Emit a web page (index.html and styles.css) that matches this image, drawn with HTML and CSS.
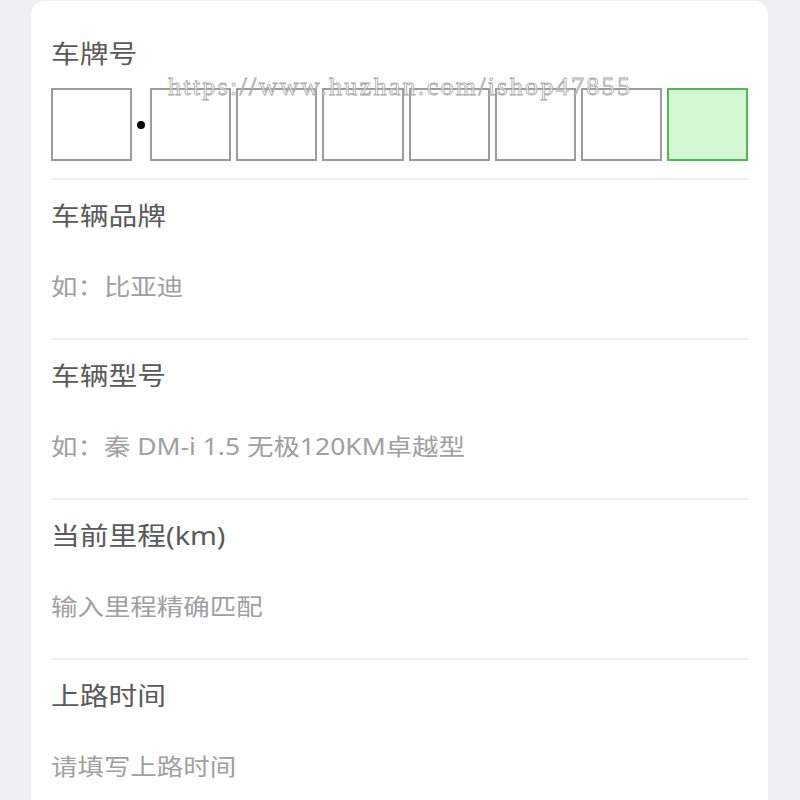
FILE: index.html
```html
<!DOCTYPE html>
<html lang="zh">
<head>
<meta charset="utf-8">
<link rel="stylesheet" href="styles.css">
</head>
<body>
<div class="card">
  <div class="plate-field">
    <div class="label"><span class="st">车牌号</span></div>
    <div class="plate-row">
      <div class="box"></div>
      <div class="dot"></div>
      <div class="box"></div>
      <div class="box"></div>
      <div class="box"></div>
      <div class="box"></div>
      <div class="box"></div>
      <div class="box"></div>
      <div class="box box-new"></div>
    </div>
  </div>
  <div class="field">
    <div class="label"><span class="st">车辆品牌</span></div>
    <div class="ph"><span class="st">如：比亚迪</span></div>
  </div>
  <div class="field">
    <div class="label"><span class="st">车辆型号</span></div>
    <div class="ph"><span class="st">如：秦 DM-i 1.5 无极120KM卓越型</span></div>
  </div>
  <div class="field">
    <div class="label"><span class="st">当前里程(km)</span></div>
    <div class="ph"><span class="st">输入里程精确匹配</span></div>
  </div>
  <div class="field">
    <div class="label"><span class="st">上路时间</span></div>
    <div class="ph"><span class="st">请填写上路时间</span></div>
  </div>
</div>
<div class="watermark">https://www.huzhan.com/ishop47855</div>
</body>
</html>
```
FILE: styles.css
```css
html, body {
  margin: 0;
  padding: 0;
  background: #eef0f4;
  font-family: "Noto Sans", "Noto Sans CJK SC", sans-serif;
  overflow: hidden;
}
.card {
  background: #ffffff;
  margin: 1px 32px 0 31px;
  padding: 0 20px;
  border-radius: 14px;
  box-sizing: border-box;
}
.st {
  display: inline-block;
  transform: scaleX(1.15);
  transform-origin: left center;
  white-space: nowrap;
}
.label {
  font-size: 25px;
  line-height: 32px;
  color: #5a5a5a;
}
.ph {
  font-size: 23px;
  line-height: 32px;
  color: #a0a0a0;
  margin-top: 39px;
}
.ph-last {
  margin-bottom: 0;
}
.plate-field {
  padding: 36px 0 17px;
}
.plate-row {
  display: flex;
  align-items: center;
  gap: 5px;
  margin-top: 19px;
}
.box {
  flex: 1;
  height: 73px;
  border: 2px solid #9c9c9c;
  box-sizing: border-box;
  background: #ffffff;
}
.box-new {
  border-color: #4fbb55;
  background: #d3f7d3;
}
.dot {
  width: 8px;
  height: 8px;
  border-radius: 50%;
  background: #000000;
}
.field {
  border-top: 2px solid #ececec;
  padding: 19px 0 36px;
}
.watermark {
  position: absolute;
  top: 72px;
  left: 168px;
  font-family: "Liberation Serif", serif;
  font-size: 26px;
  letter-spacing: 2.3px;
  color: rgba(255, 255, 255, 0.6);
  -webkit-text-stroke: 0.8px #a8a8a8;
  white-space: nowrap;
}
```
